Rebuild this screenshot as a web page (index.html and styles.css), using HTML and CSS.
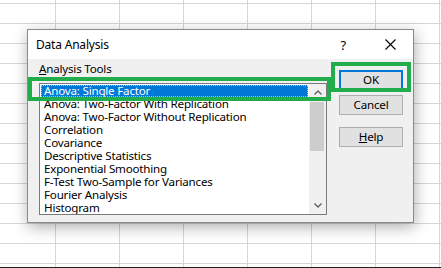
FILE: index.html
```html
<!DOCTYPE html>
<html>
<head>
<meta charset="utf-8">
<link rel="stylesheet" href="styles.css">
</head>
<body>
<div class="desk">
  <div class="dialog">
    <div class="titlebar">
      <span class="title">Data Analysis</span>
      <span class="help-q">?</span>
      <svg class="close" width="11" height="11" viewBox="0 0 11 11"><path d="M0.5 0.5L10.5 10.5M10.5 0.5L0.5 10.5" stroke="#000" stroke-width="1.1" fill="none"/></svg>
    </div>
    <div class="body">
      <div class="left">
        <div class="label"><u>A</u>nalysis Tools</div>
        <div class="listbox">
          <div class="items">
            <div class="item sel">Anova: Single Factor</div>
            <div class="item">Anova: Two-Factor With Replication</div>
            <div class="item">Anova: Two-Factor Without Replication</div>
            <div class="item">Correlation</div>
            <div class="item">Covariance</div>
            <div class="item">Descriptive Statistics</div>
            <div class="item">Exponential Smoothing</div>
            <div class="item">F-Test Two-Sample for Variances</div>
            <div class="item">Fourier Analysis</div>
            <div class="item">Histogram</div>
          </div>
          <div class="scrollbar">
            <div class="arrow"><svg width="8" height="5" viewBox="0 0 8 5"><path d="M0.5 4.5L4 1L7.5 4.5" stroke="#606060" stroke-width="1.4" fill="none"/></svg></div>
            <div class="thumb"></div>
            <div class="track"></div>
            <div class="arrow"><svg width="8" height="5" viewBox="0 0 8 5"><path d="M0.5 0.5L4 4L7.5 0.5" stroke="#606060" stroke-width="1.4" fill="none"/></svg></div>
          </div>
        </div>
      </div>
      <div class="buttons">
        <div class="btn default">OK</div>
        <div class="btn cancel">Cancel</div>
        <div class="btn help"><u>H</u>elp</div>
      </div>
    </div>
    <div class="mark mark-list"></div>
    <div class="mark mark-ok"></div>
  </div>
</div>
</body>
</html>
```
FILE: styles.css
```css
html, body {
  margin: 0;
  padding: 0;
}
body {
  width: 441px;
  height: 268px;
  overflow: hidden;
  background: #fff;
  font-family: "Noto Sans", "Open Sans", sans-serif;
  font-size: 11.6px;
  letter-spacing: -0.2px;
  color: #000;
}
.desk {
  box-sizing: border-box;
  height: 268px;
  border-bottom: 1px solid #222;
  padding: 29px 0 0 27px;
  background-color: #fff;
  background-image:
    linear-gradient(to right, #d6d6d6 1px, transparent 1px),
    linear-gradient(to bottom, #d6d6d6 1px, transparent 1px);
  background-size: 64px 20px, 64px 20px;
  background-position: 55px 0, 0 3px;
}
.dialog {
  position: relative;
  width: 387px;
  height: 194px;
  box-sizing: border-box;
  border: 1px solid #8a8a8a;
  background: #f0f0f0;
  box-shadow: 1px 4px 14px rgba(0, 0, 0, 0.32);
  display: flex;
  flex-direction: column;
}
.titlebar {
  height: 29px;
  background: #fff;
  display: flex;
  align-items: center;
  padding-left: 8px;
}
.title {
  font-size: 12px;
  flex: 1;
  padding-bottom: 1px;
}
.help-q {
  font-size: 13px;
  margin-right: 39px;
}
.close {
  margin-right: 17px;
}
.body {
  flex: 1;
  display: flex;
  padding: 2px 0 0 11px;
}
.left {
  display: flex;
  flex-direction: column;
}
.label {
  line-height: 15px;
  height: 15px;
  margin-bottom: 7px;
}
.listbox {
  width: 288px;
  height: 132px;
  box-sizing: border-box;
  border: 1px solid #7a7a7a;
  background: #fff;
  display: flex;
}
.items {
  flex: 1;
  padding: 0 1px;
  overflow: hidden;
}
.item {
  height: 13px;
  line-height: 13px;
  padding-left: 3px;
  white-space: nowrap;
}
.item.sel {
  margin-top: 1px;
  height: 12px;
  line-height: 12px;
  background: #0078d7;
  color: #fff;
  outline: 1px dotted #9ec7ef;
  outline-offset: -1px;
}
.scrollbar {
  width: 17px;
  background: #f0f0f0;
  display: flex;
  flex-direction: column;
}
.arrow {
  height: 17px;
  display: flex;
  align-items: center;
  justify-content: center;
}
.thumb {
  height: 49px;
  margin: 1px 2px 0 1px;
  background: #cdcdcd;
}
.track {
  flex: 1;
}
.buttons {
  display: flex;
  flex-direction: column;
  margin-left: 12px;
  padding-top: 9px;
}
.btn {
  width: 64px;
  height: 20px;
  box-sizing: border-box;
  border: 1px solid #adadad;
  background: #e1e1e1;
  display: flex;
  align-items: center;
  justify-content: center;
  line-height: 14px;
}
.btn.default {
  border: 2px solid #0078d7;
}
.btn.cancel {
  margin-top: 5px;
}
.btn.help {
  margin-top: 12px;
}
.mark {
  position: absolute;
  box-sizing: border-box;
  border: 4px solid #22ad4c;
}
.mark-list {
  left: 0;
  top: 47px;
  width: 303px;
  height: 24px;
}
.mark-ok {
  left: 303px;
  top: 32px;
  width: 80px;
  height: 30px;
}
```
